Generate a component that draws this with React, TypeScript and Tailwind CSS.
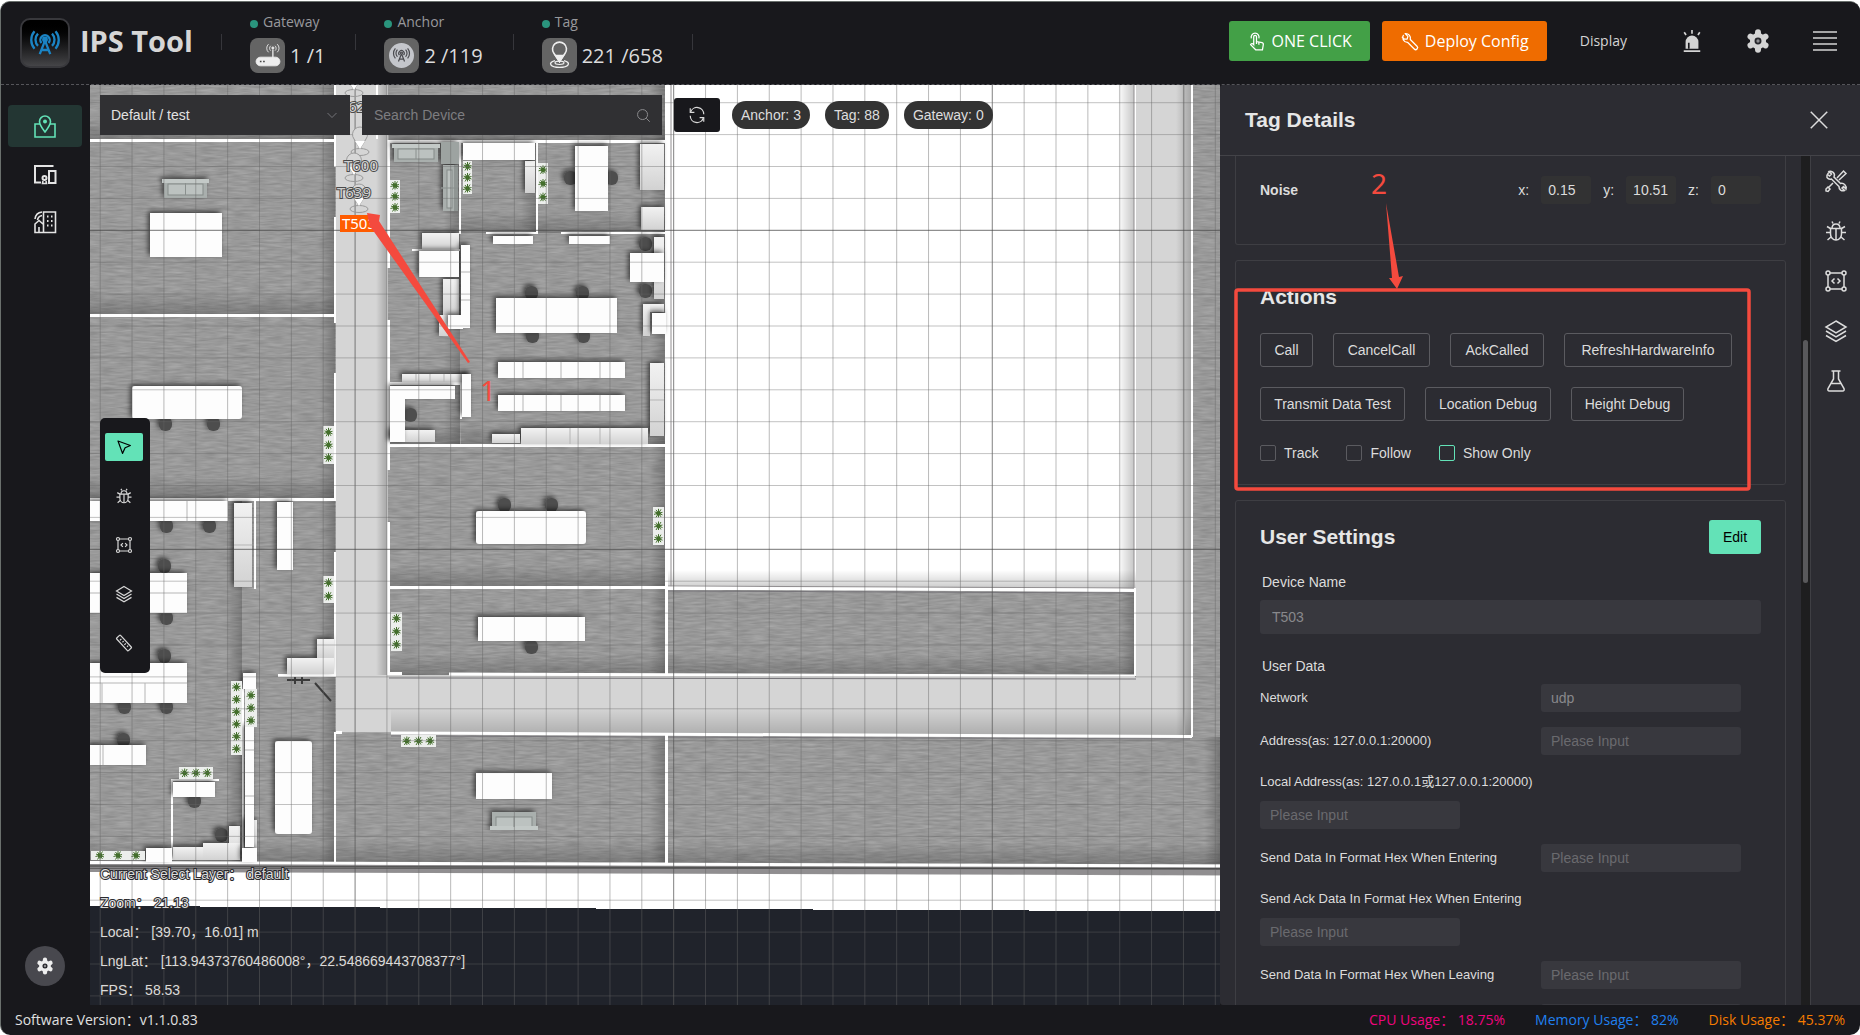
import { ReactNode, useState } from "react";
import { clsx } from "clsx";

type Box = [x: number, y: number, w: number, h: number, r?: number];

const range = (n: number) => Array.from({ length: n }, (_, i) => i);

/* ---------- floor plan data, in map pixels ---------- */

const rooms: Box[] = [
  [90, 85, 245, 55],
  [90, 141, 245, 173],
  [90, 317, 245, 181],
  [90, 500, 152, 362],
  [257, 500, 78, 362],
  [389, 85, 277, 55],
  [389, 142, 71, 303],
  [461, 142, 76, 91],
  [538, 142, 128, 91],
  [461, 234, 205, 211],
  [389, 447, 277, 140],
  [389, 589, 277, 86],
  [336, 735, 330, 127],
  [667, 592, 467, 83],
  [667, 737, 553, 127],
];

const walls: Box[] = [
  [90, 139, 246, 3],
  [90, 314, 246, 3],
  [90, 498, 246, 3],
  [334, 85, 2, 82],
  [334, 217, 2, 106],
  [334, 373, 2, 127],
  [334, 552, 2, 125],
  [334, 732, 2, 130],
  [387, 140, 3, 128],
  [387, 320, 3, 150],
  [387, 522, 3, 153],
  [387, 140, 280, 3],
  [376, 85, 2, 54],
  [665, 85, 3, 590],
  [665, 735, 3, 128],
  [459, 142, 2, 92],
  [536, 142, 2, 92],
  [486, 232, 52, 2],
  [561, 232, 105, 2],
  [412, 249, 48, 2],
  [389, 382, 73, 3],
  [460, 384, 2, 35],
  [389, 444, 278, 3],
  [389, 586, 278, 3],
  [387, 672, 15, 3],
  [1134, 590, 2, 86],
  [336, 731, 6, 3],
  [1191, 85, 2, 652],
  [278, 674, 58, 3],
  [254, 500, 2, 89],
  [242, 689, 2, 173],
  [171, 779, 48, 2],
  [171, 780, 2, 80],
];

const furniture: Box[] = [
  [150, 213, 72, 44],
  [132, 386, 110, 33, 3],
  [90, 501, 138, 20],
  [277, 502, 16, 68],
  [90, 573, 97, 40],
  [90, 663, 97, 40],
  [243, 673, 13, 16],
  [275, 741, 37, 93, 3],
  [90, 745, 56, 20],
  [173, 782, 42, 15],
  [146, 848, 26, 14],
  [242, 848, 15, 14],
  [245, 727, 9, 120],
  [463, 143, 72, 17],
  [575, 146, 33, 65],
  [493, 236, 40, 8],
  [569, 236, 41, 8],
  [419, 251, 40, 26],
  [461, 245, 9, 83],
  [448, 315, 15, 14],
  [496, 298, 121, 35],
  [498, 362, 127, 16],
  [498, 395, 127, 16],
  [462, 374, 9, 43],
  [390, 386, 15, 56],
  [390, 386, 65, 13],
  [652, 313, 14, 21],
  [630, 253, 34, 29],
  [476, 511, 110, 33, 3],
  [478, 617, 107, 24],
  [476, 773, 76, 26],
];

const cabinets: Box[] = [
  [234, 503, 18, 84],
  [317, 639, 17, 19],
  [287, 658, 47, 16],
  [245, 820, 12, 28],
  [229, 826, 11, 34],
  [203, 843, 37, 17],
  [173, 847, 30, 13],
  [525, 161, 10, 32],
  [640, 144, 24, 46],
  [641, 207, 23, 23],
  [654, 237, 10, 62],
  [643, 304, 21, 8],
  [643, 304, 7, 32],
  [422, 233, 37, 16],
  [443, 279, 16, 36],
  [439, 315, 9, 21],
  [402, 374, 68, 8],
  [650, 363, 14, 73],
  [492, 434, 28, 9],
  [521, 428, 127, 16],
  [390, 430, 45, 12],
];

const chairs: [number, number][] = [
  [165, 424], [213, 424], [166, 526], [209, 526], [164, 566], [166, 618], [164, 656],
  [124, 707], [166, 707], [123, 740], [194, 801], [221, 835], [570, 178], [611, 178],
  [645, 244], [645, 291], [531, 293], [582, 293], [532, 336], [583, 336], [410, 415],
  [504, 505], [551, 505], [531, 647],
];

const planters: { x: number; y: number; w: number; h: number; n: number }[] = [
  { x: 323, y: 426, w: 11, h: 38, n: 3 },
  { x: 323, y: 576, w: 11, h: 27, n: 2 },
  { x: 231, y: 681, w: 11, h: 37, n: 3 },
  { x: 231, y: 718, w: 11, h: 37, n: 3 },
  { x: 245, y: 689, w: 12, h: 38, n: 3 },
  { x: 179, y: 767, w: 34, h: 12, n: 3 },
  { x: 91, y: 851, w: 54, h: 9, n: 3 },
  { x: 401, y: 735, w: 35, h: 12, n: 3 },
  { x: 653, y: 507, w: 11, h: 38, n: 3 },
  { x: 391, y: 612, w: 11, h: 39, n: 3 },
  { x: 390, y: 180, w: 10, h: 33, n: 3 },
  { x: 463, y: 161, w: 9, h: 33, n: 3 },
  { x: 538, y: 163, w: 10, h: 41, n: 3 },
];

function Planter({ x, y, w, h, n }: { x: number; y: number; w: number; h: number; n: number }) {
  const wide = w > h;
  return (
    <g>
      <rect x={x} y={y} width={w} height={h} fill="#eceeec" />
      {range(n).map((i) => {
        const t = (i + 0.5) / n;
        const cx = wide ? x + w * t : x + w / 2;
        const cy = wide ? y + h / 2 : y + h * t;
        return (
          <g key={i} transform={`translate(${cx} ${cy})`}>
            <circle r="2.200" fill="#355c22" />
            <path
              d="M-4 -1.500L4 1.500M-2.500 4L2.500 -4M-4.500 1L4 -1M-2.500 -3.500L2.500 3.500M0 -4.500V4"
              stroke="#44702c"
              strokeWidth="1"
            />
          </g>
        );
      })}
    </g>
  );
}

function Sofa({ x, y, w, h, side }: { x: number; y: number; w: number; h: number; side: "top" | "bottom" | "right" }) {
  return (
    <g>
      <rect x={x + 2} y={y} width={w - 4} height={h} fill="#a9afad" />
      <rect x={x + 6} y={y + 5} width={w - 12} height={h - 8} fill="#bcc2c0" stroke="#858b89" />
      {side === "right" ? (
        <rect x={x + w - 4} y={y} width={4} height={h} fill="#8f9593" />
      ) : (
        <rect x={x} y={side === "top" ? y : y + h - 4} width={w} height={4} fill="#c3c9c7" />
      )}
      {side === "right" ? (
        <path d={`M${x} ${y + h / 2}H${x + w}`} stroke="#8a908e" />
      ) : (
        <path d={`M${x + w / 2} ${y + 4}V${y + h - 3}`} stroke="#8a908e" />
      )}
    </g>
  );
}

function Beacon({ x, y }: { x: number; y: number }) {
  return (
    <g>
      <ellipse cx={x} cy={y} rx="9" ry="3.500" fill="none" stroke="#9a9a9a" />
      <path d={`M${x} ${y - 3}L${x - 6} ${y - 13}A7.500 7.500 0 1 1 ${x + 6} ${y - 13}Z`} fill="#d8d8d8" stroke="#9b9b9b" />
      <path d={`M${x} ${y - 3}L${x - 5} ${y - 11}H${x + 5}Z`} fill="#fff" />
    </g>
  );
}

function FloorPlan() {
  return (
    <svg
      className="absolute inset-0 h-full w-full"
      viewBox="90 85 1130 920"
      preserveAspectRatio="xMinYMin slice"
      aria-label="Floor plan"
      fontFamily='"Noto Sans", sans-serif'
    >
      <defs>
        <filter id="carpet" x="0" y="0" width="100%" height="100%" colorInterpolationFilters="sRGB">
          <feTurbulence type="fractalNoise" baseFrequency="0.06 0.5" numOctaves="2" seed="4" />
          <feColorMatrix values="0.16 0 0 0 0.52  0.16 0 0 0 0.52  0.16 0 0 0 0.52  0 0 0 0 1" />
        </filter>
        <filter id="cast" x="-20%" y="-20%" width="140%" height="140%">
          <feDropShadow dx="-2" dy="-2" stdDeviation="2.500" floodColor="#000" floodOpacity="0.6" />
        </filter>
        <linearGradient id="shadeR"><stop offset="0" stopOpacity="0" /><stop offset="1" stopOpacity="0.22" /></linearGradient>
        <linearGradient id="shadeB" x2="0" y2="1"><stop offset="0" stopOpacity="0" /><stop offset="1" stopOpacity="0.2" /></linearGradient>
        <linearGradient id="cab" x2="0" y2="1"><stop offset="0" stopColor="#f2f2f2" /><stop offset="1" stopColor="#d2d2d2" /></linearGradient>
      </defs>

      <rect x="90" y="85" width="1130" height="920" fill="#fff" />
      <rect x="90" y="85" width="1130" height="792" fill="#999" filter="url(#carpet)" />
      {rooms.map(([x, y, w, h], i) => (
        <g key={i}>
          <rect x={x + w - 16} y={y} width={16} height={h} fill="url(#shadeR)" />
          <rect x={x} y={y + h - 22} width={w} height={22} fill="url(#shadeB)" />
        </g>
      ))}

      {/* corridors */}
      <path d="M336 85H388V675L1136 677V85H1192V737L336 732Z" fill="#d5d5d5" />
      <rect x="376" y="85" width="11" height="590" fill="url(#shadeR)" />
      <path d="M391 708H1192V737L391 732Z" fill="url(#shadeB)" />
      <rect x="1176" y="85" width="15" height="650" fill="url(#shadeR)" />
      <path d="M1184 85V734" stroke="#a6a6a6" strokeWidth="2" />

      {/* courtyard */}
      <rect x="668" y="85" width="468" height="505" fill="#fff" />
      <rect x="1118" y="85" width="16" height="505" fill="url(#shadeR)" />
      <rect x="668" y="570" width="468" height="18" fill="url(#shadeB)" />
      <path d="M1134 85V588M668 586L1134 588M671 85V588" stroke="#918e90" fill="none" />
      <path d="M668 591L1134 593M391 736L1190 739M389 678L1136 679" stroke="#77757a" fill="none" />

      <g fill="#fff">
        {walls.map(([x, y, w, h], i) => (
          <rect key={i} x={x} y={y} width={w} height={h} />
        ))}
      </g>
      <path
        d="M90 862.500L1220 866M391 733L1192 736.500M449 674L1135 676M667 588L1136 590.500"
        stroke="#fff"
        strokeWidth="3"
        fill="none"
      />

      <g filter="url(#cast)" fill="#4d4d4d">
        {chairs.map(([x, y], i) => (
          <rect key={i} x={x - 6} y={y - 7} width="13" height="14" rx="6" />
        ))}
      </g>
      <g filter="url(#cast)" fill="url(#cab)">
        {cabinets.map(([x, y, w, h], i) => (
          <rect key={i} x={x} y={y} width={w} height={h} />
        ))}
      </g>
      <g filter="url(#cast)" fill="#fdfdfd">
        {furniture.map(([x, y, w, h, r], i) => (
          <rect key={i} x={x} y={y} width={w} height={h} rx={r} />
        ))}
      </g>
      <path
        d="M102 683V703M145 683V703M90 683H187M90 593H187M187 501V521M234 545H252M245 750H254M245 796H254M103 745V765M650 400H664M523 362V378M561 362V378M600 362V378M523 395V411M561 395V411M600 395V411M570 428V444M600 428V444M461 272H470M461 300H470M416 374V382M430 374V382M444 374V382"
        stroke="#b5b5b5"
        fill="none"
      />
      <g filter="url(#cast)">
        <Sofa x={162} y={179} w={47} h={19} side="top" />
        <Sofa x={392} y={144} w={48} h={18} side="top" />
        <rect x={441} y={142} width={18} height={22} fill="#9da3a1" />
        <Sofa x={441} y={165} w={17} h={46} side="right" />
        <Sofa x={490} y={812} w={48} h={18} side="bottom" />
      </g>
      {planters.map((p, i) => (
        <Planter key={i} {...p} />
      ))}
      <path d="M287 680H310M295 677V684M302 677V684M315 683L331 701" stroke="#3a3a3a" strokeWidth="2" fill="none" />

      {/* outer wall and the area outside the building */}
      <path d="M90 864L1220 868V875L90 872Z" fill="#908e90" />
      <path d="M90 866L1220 869" stroke="#555" strokeWidth="1.500" />
      <path d="M90 872L1220 875.500V905H90Z" fill="#fff" />
      <path d="M90 906H200V907H380V908H596V909H813V910H1029V911H1220V1005H90Z" fill="#20232b" shapeRendering="crispEdges" />

      {/* measuring grid */}
      {range(36).map((k) => (
        <path
          key={k}
          d={`M${100.2 + 31.86 * k} 85V1005`}
          stroke={k % 10 === 8 ? "#555" : "#666"}
          strokeOpacity={k % 10 === 8 ? 0.75 : 0.45}
        />
      ))}
      {range(29).map((k) => (
        <path
          key={k}
          d={`M90 ${102.7 + 31.9 * k}H1220`}
          stroke={k % 10 === 4 ? "#444" : "#666"}
          strokeOpacity={k % 10 === 4 ? 0.75 : 0.4}
        />
      ))}

      {/* tags */}
      <Beacon x={354} y={93} />
      <Beacon x={360} y={152} />
      <Beacon x={354} y={178} />
      <Beacon x={359} y={209} />
      <g fontSize="15" textAnchor="middle" fill="#d0d0d0" stroke="#4a4a4a" strokeWidth="2" paintOrder="stroke">
        <text x="357" y="112">T623</text>
        <text x="361" y="171">T600</text>
        <text x="354" y="198">T639</text>
      </g>
      <rect x="340" y="215" width="39" height="17" fill="#ff5c00" />
      <text x="359" y="229" fontSize="15" textAnchor="middle" fill="#fff">T503</text>
    </svg>
  );
}

/* ---------- icons ---------- */

function Icon({ size = 24, stroke = 1.5, className, children }: { size?: number; stroke?: number; className?: string; children: ReactNode }) {
  return (
    <svg
      width={size}
      height={size}
      viewBox="0 0 24 24"
      fill="none"
      stroke="currentColor"
      strokeWidth={stroke}
      className={clsx("shrink-0 overflow-visible", className)}
      aria-hidden="true"
    >
      {children}
    </svg>
  );
}

const mapPin = (
  <>
    <path d="M7 10H2V23H22V10H17" />
    <path d="M12 18C9 14 6.500 11 6.500 7.500A5.500 5.500 0 0 1 17.500 7.500C17.500 11 15 14 12 18Z" />
    <circle cx="12" cy="7.500" r="1.200" fill="currentColor" />
  </>
);
const devices = (
  <>
    <path d="M8 20.500H2V4H20.500" strokeWidth="2" />
    <rect x="16" y="9" width="6.500" height="12" strokeWidth="2" />
    <circle cx="11.500" cy="16" r="2" strokeWidth="2" />
    <path d="M10 19L9.500 21.500H13.500L13 19" />
  </>
);
const building = (
  <>
    <path d="M10.500 22.500V2H22.500V22.500H2V14L6 10.500L10 14" />
    <path d="M2 9C2.500 4.500 5 2.500 9 2M4.500 10C5 7 6.500 6 9 5.500M6 22.500V17" />
    <path d="M14 6.500H15.500M18 6.500H19.500M14 11H15.500M18 11H19.500M14 15.500H15.500M18 15.500H19.500" strokeWidth="2" />
  </>
);
const cursor = <path d="M4 4L20.500 10L13.500 13L10 20.500Z" strokeLinejoin="round" />;
const bug = (
  <>
    <path d="M6.500 9.500H17.500V15A5.500 6 0 0 1 6.500 15Z" />
    <path d="M8 9.500C8 3.500 16 3.500 16 9.500M12 9.500V21M9 4.500L8 2.500M15 4.500L16 2.500M6.500 9.500L3 7.500M17.500 9.500L21 7.500M2 13.500H6.500M17.500 13.500H22M7 18L3.500 21M17 18L20.500 21" />
  </>
);
const region = (
  <>
    <path d="M6 4H18M6 20H18M4 6V18M20 6V18" />
    <circle cx="4" cy="4" r="2" /><circle cx="20" cy="4" r="2" />
    <circle cx="4" cy="20" r="2" /><circle cx="20" cy="20" r="2" />
    <path d="M10.500 9.500L8 12L10.500 14.500M13.500 9.500L16 12L13.500 14.500" />
  </>
);
const layers = (
  <>
    <path d="M12 2L22 8L12 14L2 8Z" />
    <path d="M2 12L12 18L22 12M2 16.500L12 22.500L22 16.500" />
  </>
);
const ruler = (
  <>
    <rect x="-3.500" y="-11.500" width="7" height="23" rx="1" transform="translate(12 12) rotate(-43)" />
    <path d="M8.500 6.500L6.500 8.500M11.500 9.500L10 11M14.500 12.500L12.500 14.500M17.500 15.500L16 17" />
  </>
);
const tools = (
  <>
    <path d="M8.500 3A4.500 4.500 0 0 0 3 8.500A4 4 0 0 0 7.500 10L15 17.500A4 4 0 0 0 20.500 21.500L18 19L19.500 17.500L22 20A4.500 4.500 0 0 0 16.500 14.500L10 8A4 4 0 0 0 5 2.500L7.500 5L5.500 7L3 5" />
    <path d="M13 9L19.500 2L22 4.500L15 11M9 14L4 19M2 20L4 18L6 20L4 22.500L2 22Z" />
  </>
);
const flask = <path d="M7.500 2H16.500M9.500 2V10L4 19.500C3.500 21 4 22 5.500 22H18.500C20 22 20.500 21 20 19.500L14.500 10V2M7 14.500H17" />;
const wrench = (
  <path
    d="M4.500 3.500A6 6 0 0 0 9.500 13L18 21.500A2.200 2.200 0 0 0 21.500 18L13 9.500A6 6 0 0 0 6.500 2L10 5.500L9 9L5.500 9L2.500 6"
    strokeLinejoin="round"
  />
);
const tap = (
  <>
    <path d="M8.500 14V6A1.700 1.700 0 0 1 12 6V12L19 13.500C20.500 14 21 15 20.500 16.500L19.500 22.500H11L4.500 16C5 14.500 7 14 8.500 16Z" />
    <path d="M5.500 8A5 5 0 1 1 15 8M15 12.500V16M12 12V15" />
  </>
);
const gear = (
  <>
    <path d="M12 2.500V21.500M3.800 7.200L20.200 16.800M3.800 16.800L20.200 7.200" strokeWidth="6.500" strokeLinecap="round" />
    <circle cx="12" cy="12" r="8" fill="currentColor" />
    <circle cx="12" cy="12" r="2.800" className="fill-[#8c8c8f] stroke-[#26262b]" strokeWidth="2" />
  </>
);
const antenna = (
  <>
    <path d="M7.500 21.500L12 10L16.500 21.500M9 18H15" />
    <path d="M9 12A4 4 0 1 1 15 12M6 14.500A7.500 7.500 0 0 1 6 4M18 14.500A7.500 7.500 0 0 0 18 4M3 17A11.500 11.500 0 0 1 3 2M21 17A11.500 11.500 0 0 0 21 2" />
    <circle cx="12" cy="9" r="1.500" fill="currentColor" />
  </>
);

const statIcons = {
  Gateway: (
    <Icon size={26} stroke={0.8}>
      <rect x="1" y="14" width="22" height="8" rx="4" fill="currentColor" />
      <path d="M16.500 7V15" strokeWidth="1.200" />
      <path d="M14.500 8A3 3 0 0 1 14.500 3.500M18.500 8A3 3 0 0 0 18.500 3.500M12.500 9.500A5 5 0 0 1 12.500 2M20.500 9.500A5 5 0 0 0 20.500 2" />
      <circle cx="16.500" cy="5.500" r="1" fill="currentColor" />
      <path d="M4.500 18H6M7.500 18H9" stroke="#444" strokeWidth="1.500" />
    </Icon>
  ),
  Anchor: (
    <Icon size={25} stroke={1}>
      <circle cx="12" cy="12" r="12" fill="currentColor" stroke="none" className="text-[#c4c6cb]" />
      <g transform="translate(4.200 3.800) scale(.65)" stroke="#4b4b50" strokeWidth="1.800">{antenna}</g>
    </Icon>
  ),
  Tag: (
    <Icon size={27} stroke={1.4}>
      <path d="M12 17.500L7 10A6.200 6.200 0 1 1 17 10Z" />
      <path d="M12 17.500L8.500 12H15.500Z" fill="currentColor" />
      <path d="M8 16.500C1 18.500 4 22.500 12 22.500S23 18.500 16 16.500" strokeWidth="1.200" />
      <ellipse cx="12" cy="18.500" rx="4" ry="1.500" strokeWidth="1" />
    </Icon>
  ),
};

/* ---------- page ---------- */

const stats: { label: keyof typeof statIcons; value: string }[] = [
  { label: "Gateway", value: "1 /1" },
  { label: "Anchor", value: "2 /119" },
  { label: "Tag", value: "221 /658" },
];

function Header() {
  return (
    <header className="flex h-[83px] shrink-0 items-center border-b border-dashed border-[#55555a] bg-[#18181c] pr-[23px] pl-[19px] font-['Open_Sans',sans-serif]">
      <div className="grid size-[50px] place-items-center rounded-[10px] border-2 border-[#38383c] bg-linear-to-b from-black to-[#454548] text-[#1b84c4]">
        <Icon size={28} stroke={2}>{antenna}</Icon>
      </div>
      <h1 className="mb-1 ml-[10px] w-[112px] text-[29px] font-bold whitespace-nowrap text-[#d6d6d6]">IPS Tool</h1>
      <dl className="mb-[2px] ml-[29px] flex">
        {stats.map((s) => (
          <div key={s.label} className="relative flex flex-col pr-[30px] pl-[29px] before:absolute before:top-[22px] before:left-0 before:h-4 before:w-px before:bg-[#36363b] last:after:absolute last:after:top-[22px] last:after:right-0 last:after:h-4 last:after:w-px last:after:bg-[#36363b]">
            <dt className="flex h-5 items-center gap-[5px] text-sm text-[#98989c]">
              <span className="mt-1 size-2 rounded-full bg-[#2a947d]" />
              {s.label}
            </dt>
            <dd className="mt-[6px] flex items-center gap-[5px] text-[20px] leading-[35px] whitespace-nowrap text-[#dcdcdc]">
              <span className="grid size-[35px] place-items-center rounded-lg bg-[#646464] text-[#eee]">{statIcons[s.label]}</span>
              {s.value}
            </dd>
          </div>
        ))}
      </dl>
      <div className="mb-1 ml-auto flex items-center text-[#d4d4d4]">
        <button className="flex h-10 w-[141px] items-center justify-center gap-[6px] rounded-[3px] bg-[#43a047] text-base text-white">
          <Icon size={19} stroke={1.6}>{tap}</Icon>
          ONE CLICK
        </button>
        <button className="ml-3 flex h-10 w-[165px] items-center justify-center gap-[6px] rounded-[3px] bg-[#ef6c00] text-base text-white">
          <Icon size={19} stroke={1.6}>{wrench}</Icon>
          Deploy Config
        </button>
        <button className="ml-[33px] text-sm">Display</button>
        <button className="ml-[54px]" aria-label="Alarms">
          <Icon size={22} stroke={1.8}>
            <path d="M3 23H21" strokeWidth="2" />
            <path d="M5 20.500V13A7 7 0 0 1 19 13V20.500Z" fill="currentColor" stroke="none" />
            <path d="M8.500 20.500V14" stroke="#18181c" />
            <path d="M12 0V4M3.500 2.500L5.500 5.500M20.500 2.500L18.500 5.500" />
          </Icon>
        </button>
        <button className="ml-11" aria-label="Settings">
          <Icon size={22}>{gear}</Icon>
        </button>
        <button className="ml-11" aria-label="Menu">
          <Icon size={24} stroke={1.4}>
            <path d="M0 3H24M0 9H24M0 15H24M0 21H24" />
          </Icon>
        </button>
      </div>
    </header>
  );
}

function Sidebar() {
  const items = [
    { name: "Map", icon: mapPin },
    { name: "Devices", icon: devices },
    { name: "Buildings", icon: building },
  ];
  return (
    <nav className="flex w-[89px] shrink-0 flex-col items-center bg-[#18181c] pt-5 pr-px pb-[19px]">
      {items.map((item, i) => (
        <button
          key={item.name}
          aria-label={item.name}
          className={clsx(
            "mb-[6px] grid h-[42px] w-[74px] place-items-center rounded",
            i === 0 ? "bg-[#233633] text-[#63e2b7]" : "text-[#e4e4e4]"
          )}
        >
          <Icon size={24} stroke={1.6}>{item.icon}</Icon>
        </button>
      ))}
      <button aria-label="Options" className="mt-auto grid size-10 place-items-center rounded-full bg-[#48484e] text-[#eee]">
        <Icon size={16}>{gear}</Icon>
      </button>
    </nav>
  );
}

const mapTools = [
  { name: "Select", icon: cursor },
  { name: "Debug", icon: bug },
  { name: "Region", icon: region },
  { name: "Layers", icon: layers },
  { name: "Measure", icon: ruler },
];

const readout = [
  "Current Select Layer： default",
  "Zoom： 21.13",
  "Local： [39.70，16.01] m",
  "LngLat： [113.94373760486008°，22.548669443708377°]",
  "FPS： 58.53",
];

function MapView() {
  const [tool, setTool] = useState("Select");
  return (
    <main className="relative flex min-w-0 flex-1 flex-col overflow-hidden">
      <FloorPlan />
      <div className="relative flex items-center px-[10px] pt-[10px]">
        <label className="relative w-[250px]">
          <select aria-label="Map" className="h-10 w-full appearance-none bg-[#303033] pr-8 pl-[11px] text-sm text-[#e2e2e2]">
            <option>Default / test</option>
          </select>
          <Icon size={12} className="pointer-events-none absolute top-[14px] right-3 text-[#8a8a8d]">
            <path d="M3 8L12 17L21 8" />
          </Icon>
        </label>
        <label className="relative ml-3 w-[300px]">
          <input aria-label="Search Device" placeholder="Search Device" className="h-10 w-full bg-[#303033] pr-9 pl-3 text-sm placeholder:text-[#7d7d80]" />
          <Icon size={15} stroke={1.6} className="absolute top-[13px] right-[11px] text-[#8a8a8d]">
            <circle cx="10.500" cy="10.500" r="8" />
            <path d="M16.500 16.500L22 22" />
          </Icon>
        </label>
        <button aria-label="Refresh" className="ml-3 grid h-[34px] w-[46px] place-items-center rounded-[3px] bg-[#18181c] text-[#d8d8d8]">
          <Icon size={18} stroke={1.6}>
            <path d="M3 3V8.500H8.500M21 21V15.500H15.500" />
            <path d="M3.500 8A9 9 0 0 1 21 11M3 13A9 9 0 0 0 20.500 16" />
          </Icon>
        </button>
        <div className="ml-3 flex gap-[15px] text-sm text-[#dedede]">
          <span className="rounded-full bg-[#333] px-[9px] leading-7">Anchor: 3</span>
          <span className="rounded-full bg-[#333] px-[9px] leading-7">Tag: 88</span>
          <span className="rounded-full bg-[#333] px-[9px] leading-7">Gateway: 0</span>
        </div>
      </div>

      <div className="relative mt-auto mb-[332px] ml-[10px] flex h-[255px] w-[50px] flex-col items-center gap-[21px] rounded-[5px] bg-[#18181c] pt-[15px] pr-[2px]">
        {mapTools.map((t) => (
          <button
            key={t.name}
            aria-label={t.name}
            onClick={() => setTool(t.name)}
            className={clsx("grid h-7 w-[38px] place-items-center rounded-[2px]", tool === t.name ? "bg-[#63e2b7] text-black" : "text-[#d8d8d8]")}
          >
            <Icon size={18} stroke={1.6}>{t.icon}</Icon>
          </button>
        ))}
      </div>

      <ul className="absolute bottom-0 left-[10px] text-sm leading-[29px] whitespace-pre text-[#dadada] [paint-order:stroke] [-webkit-text-stroke:2px_#2a2a2e]">
        {readout.map((line) => (
          <li key={line}>{line}</li>
        ))}
      </ul>
    </main>
  );
}

function Card({ className, children }: { className?: string; children: ReactNode }) {
  return <section className={clsx("shrink-0 rounded-[3px] border border-[#3e3e43] px-6", className)}>{children}</section>;
}

const fields: { label: string; value?: string; wrap?: boolean }[] = [
  { label: "Network", value: "udp" },
  { label: "Address(as: 127.0.0.1:20000)" },
  { label: "Local Address(as: 127.0.0.1或127.0.0.1:20000)", wrap: true },
  { label: "Send Data In Format Hex When Entering" },
  { label: "Send Ack Data In Format Hex When Entering", wrap: true },
  { label: "Send Data In Format Hex When Leaving" },
];

const actions = [
  { label: "Call", width: "min-w-[53px]" },
  { label: "CancelCall", width: "min-w-[97px]" },
  { label: "AckCalled", width: "min-w-[94px]" },
  { label: "RefreshHardwareInfo", width: "min-w-[168px]" },
  { label: "Transmit Data Test", width: "min-w-[145px]" },
  { label: "Location Debug", width: "min-w-[126px]" },
  { label: "Height Debug", width: "min-w-[113px]" },
];

function TagDetails() {
  const noise = [["x", "0.15"], ["y", "10.51"], ["z", "0"]];
  const side = [
    { name: "Tools", icon: tools },
    { name: "Debug", icon: bug },
    { name: "Region", icon: region },
    { name: "Layers", icon: layers },
    { name: "Lab", icon: flask },
  ];
  return (
    <aside className="flex w-[640px] shrink-0 flex-col rounded-l-[3px] bg-[#2c2c32] text-[#dcdcdc]">
      <div className="flex h-[71px] shrink-0 items-center justify-between border-b border-[#434348] pr-8 pl-[25px]">
        <h2 className="text-[21px] font-bold text-[#e6e6e6]">Tag Details</h2>
        <button aria-label="Close">
          <Icon size={18} stroke={2}>
            <path d="M1 1L23 23M23 1L1 23" />
          </Icon>
        </button>
      </div>
      <div className="flex min-h-0 flex-1">
        <div className="flex min-w-0 flex-1 flex-col gap-[15px] overflow-hidden px-[15px] text-sm">
          <Card className="flex items-center rounded-t-none border-t-0 pt-5 pb-10">
            <span className="mr-auto font-bold">Noise</span>
            {noise.map(([axis, value]) => (
              <label key={axis} className="ml-3 flex items-center gap-3">
                {axis}:
                <input defaultValue={value} className="h-7 w-[50px] rounded-[3px] bg-[#323233] pl-[7px]" />
              </label>
            ))}
          </Card>

          <Card className="pt-6 pb-[23px]">
            <h3 className="mb-6 text-[21px] leading-6 font-bold text-[#e6e6e6]">Actions</h3>
            <div className="flex flex-wrap gap-5">
              {actions.map((a) => (
                <button key={a.label} className={clsx("h-[34px] rounded-[3px] border border-[#5b5b60] px-3 whitespace-nowrap", a.width)}>
                  {a.label}
                </button>
              ))}
            </div>
            <div className="mt-6 flex gap-7 leading-4">
              {["Track", "Follow", "Show Only"].map((c) => (
                <label key={c} className="flex gap-2">
                  <input
                    type="checkbox"
                    className={clsx("size-4 appearance-none rounded-[2px] border", c === "Show Only" ? "border-[#63e2b7]" : "border-[#5b5b60]")}
                  />
                  {c}
                </label>
              ))}
            </div>
          </Card>

          <Card className="pt-[19px] pb-6">
            <div className="flex items-center justify-between">
              <h3 className="text-[21px] font-bold text-[#e6e6e6]">User Settings</h3>
              <button className="h-[34px] w-[52px] rounded-[3px] bg-[#63e2b7] text-black">Edit</button>
            </div>
            <label className="mt-[18px] block leading-5">
              <span className="px-[2px]">Device Name</span>
              <input disabled defaultValue="T503" className="mt-2 block h-[34px] w-full rounded-[3px] bg-[#38383e] px-3 text-[#88888c]" />
            </label>
            <h4 className="mt-[22px] mb-2 px-[2px] leading-5">User Data</h4>
            <div className="flex flex-col gap-[15px] pr-5">
              {fields.map((f) => (
                <label key={f.label} className={clsx("flex justify-between", f.wrap ? "flex-col gap-[7px]" : "items-center")}>
                  <span className="text-[13px] leading-6 whitespace-nowrap">{f.label}</span>
                  <input
                    disabled
                    defaultValue={f.value}
                    placeholder="Please Input"
                    className="h-7 w-[200px] rounded-[3px] bg-[#38383e] px-[10px] text-[#88888c] placeholder:text-[#6a6a6e]"
                  />
                </label>
              ))}
              <input disabled aria-label="Ack data when leaving" className="ml-auto h-7 w-[200px] rounded-[3px] bg-[#38383e]" />
            </div>
          </Card>
        </div>
        <div className="w-[9px] bg-[#1e1e1f] px-[2px]">
          <div className="mt-[184px] h-[243px] rounded-full bg-[#59595b]" />
        </div>
        <div className="flex w-[50px] flex-col items-center gap-[26px] border-l border-[#3f3f44] pt-[13px]">
          {side.map((s) => (
            <button key={s.name} aria-label={s.name}>
              <Icon size={24} stroke={1.5}>{s.icon}</Icon>
            </button>
          ))}
        </div>
      </div>
    </aside>
  );
}

function Callouts() {
  return (
    <svg className="pointer-events-none absolute inset-0 h-full w-full" viewBox="0 0 1860 1035" preserveAspectRatio="xMaxYMin slice" fill="#f44a3e" fontFamily='"Noto Sans", sans-serif' fontSize="28">
      <path d="M367 213L380 215L379 221L470 362L468 363L372 229L370 227Z" />
      <path d="M1386 203L1399 277L1403 276L1397 289L1389 278L1392 278Z" />
      <rect x="1236" y="290" width="513" height="199" rx="2" fill="none" stroke="#f44a3e" strokeWidth="3.500" />
      <text x="480" y="401">1</text>
      <text x="1371" y="194">2</text>
    </svg>
  );
}

export default function App() {
  return (
    <div className="relative h-screen bg-white pt-px font-['Liberation_Sans','Noto_Sans_CJK_SC',sans-serif]">
      <div className="flex h-full flex-col overflow-hidden rounded-[10px] border-t border-l border-[#6a706d] bg-[#18181c]">
        <Header />
        <div className="flex min-h-0 flex-1">
          <Sidebar />
          <MapView />
          <TagDetails />
        </div>
        <footer className="flex h-[30px] shrink-0 items-center gap-[30px] pr-[15px] pl-[14px] font-['Open_Sans','Noto_Sans_CJK_SC',sans-serif] text-sm">
          <span className="mr-auto text-[#e0e0e0]">Software Version：v1.1.0.83</span>
          <span className="text-[#f0047f]">CPU Usage： 18.75%</span>
          <span className="text-[#2080f0]">Memory Usage： 82%</span>
          <span className="text-[#f57c00]">Disk Usage： 45.37%</span>
        </footer>
      </div>
      <Callouts />
    </div>
  );
}
